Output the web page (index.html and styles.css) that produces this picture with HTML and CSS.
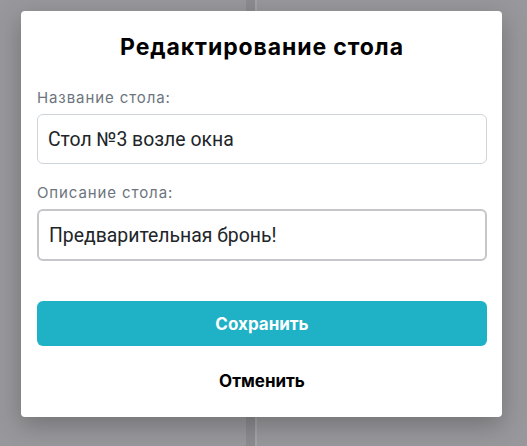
FILE: index.html
```html
<!DOCTYPE html>
<html lang="ru">
<head>
<meta charset="utf-8">
<link rel="stylesheet" href="styles.css">
</head>
<body>
<div class="backdrop">
  <div class="bg-col"></div>
  <div class="modal">
    <h1 class="title">Редактирование стола</h1>
    <label class="field">
      <span class="label">Название стола:</span>
      <input class="input" type="text" value="Стол №3 возле окна">
    </label>
    <label class="field">
      <span class="label">Описание стола:</span>
      <input class="input input-focus" type="text" value="Предварительная бронь!">
    </label>
    <button class="btn-save">Сохранить</button>
    <button class="btn-cancel">Отменить</button>
  </div>
</div>
</body>
</html>
```

FILE: styles.css
```css
* { box-sizing: border-box; }
html, body { margin: 0; padding: 0; }
body {
  width: 527px;
  height: 446px;
  overflow: hidden;
  background: #98989c;
  font-family: Inter, "Noto Sans", sans-serif;
}
.backdrop {
  position: relative;
  width: 527px;
  height: 446px;
  padding: 11px 25px 0 21px;
}
.bg-col {
  position: absolute;
  left: 246px;
  top: 0;
  width: 11px;
  height: 446px;
  background: #8c8c90;
  border-right: 2px solid #a4a4a8;
}
.modal {
  position: relative;
  width: 481px;
  height: 406px;
  background: #fff;
  border-radius: 4px;
  box-shadow: 0 8px 24px rgba(0,0,0,0.25);
  padding: 21px 15px 0 16px;
  display: flex;
  flex-direction: column;
}
.title {
  margin: 0 0 27px 0;
  text-align: center;
  font-family: Inter, "Noto Sans", sans-serif;
  font-weight: 700;
  font-size: 23px;
  letter-spacing: 0.9px;
  line-height: 30px;
  color: #000;
}
.field {
  display: flex;
  flex-direction: column;
  margin-bottom: 20px;
}
.label {
  font-family: Inter, "Noto Sans", sans-serif;
  font-size: 15px;
  letter-spacing: 0.9px;
  line-height: 18px;
  color: #6c757d;
  margin-bottom: 7px;
}
.input {
  width: 450px;
  height: 50px;
  border: 1px solid #ced4da;
  border-radius: 6px;
  padding: 0 10px;
  font-family: Roboto, "Liberation Sans", sans-serif;
  font-size: 19.4px;
  color: #212529;
  outline: none;
  background: #fff;
}
.input-focus {
  border: 2px solid #c4c6c9;
  height: 52px;
  padding: 0 10px;
}
.btn-save {
  margin-top: 20px;
  width: 450px;
  height: 45px;
  border: none;
  border-radius: 6px;
  background: #1fb1c6;
  color: #fff;
  font-family: Inter, "Noto Sans", sans-serif;
  font-weight: 700;
  font-size: 17px;
  cursor: pointer;
}
.btn-cancel {
  margin-top: 25px;
  align-self: center;
  border: none;
  background: none;
  color: #000;
  font-family: Inter, "Noto Sans", sans-serif;
  font-weight: 700;
  font-size: 17px;
  padding: 0;
  line-height: 20px;
  cursor: pointer;
}
```
